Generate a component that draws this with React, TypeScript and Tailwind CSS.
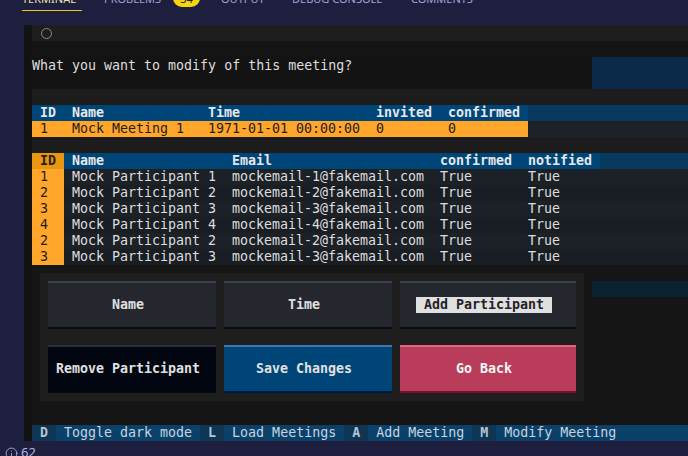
import { Info } from "lucide-react";

const meetingCols = [
	{ label: "ID", w: "w-[32px]" },
	{ label: "Name", w: "w-[136px]" },
	{ label: "Time", w: "w-[168px]" },
	{ label: "invited", w: "w-[72px]" },
	{ label: "confirmed", w: "w-[88px]" },
];

const meetingRow = ["1", "Mock Meeting 1", "1971-01-01 00:00:00", "0", "0"];

const partWidths = ["w-[160px]", "w-[208px]", "w-[88px]", "w-[80px]"];
const partHeaders = ["Name", "Email", "confirmed", "notified"];

const participants = [
	["1", "Mock Participant 1", "mockemail-1@fakemail.com"],
	["2", "Mock Participant 2", "mockemail-2@fakemail.com"],
	["3", "Mock Participant 3", "mockemail-3@fakemail.com"],
	["4", "Mock Participant 4", "mockemail-4@fakemail.com"],
	["2", "Mock Participant 2", "mockemail-2@fakemail.com"],
	["3", "Mock Participant 3", "mockemail-3@fakemail.com"],
];

const rowBg = ["bg-[#1c2027]", "bg-[#1a1d23]"];

const footerKeys = [
	["D", "Toggle dark mode"],
	["L", "Load Meetings"],
	["A", "Add Meeting"],
	["M", "Modify Meeting"],
];

// labels sit on the terminal's 8px grid, so they lean left by half a cell when they can't centre exactly
function Btn({
	label,
	cls,
	focused,
}: {
	label: string;
	cls: string;
	focused?: boolean;
}) {
	return (
		<div className={`h-[48px] flex items-center border-t-2 border-b-2 font-bold ${cls}`}>
			{focused ? (
				<span className="bg-[#e0e0e0] text-[#1f2228] px-[8px]">{label}</span>
			) : (
				<span>{label}</span>
			)}
		</div>
	);
}

export default function App() {
	return (
		<div className="w-[688px] h-[456px] bg-[#1e1f3e] flex flex-col overflow-hidden">
			{/* panel tabs, cut off at the top */}
			<div className="h-[25px] overflow-hidden shrink-0">
				<div className="-mt-[7px] flex items-start pl-[22px] text-[11px] leading-none font-['Noto_Sans',sans-serif] text-[#a3a3d6] whitespace-nowrap">
					<div className="w-[60px] h-[18px] border-b border-[#f0c40a] text-[#ece3b0]">TERMINAL</div>
					<div className="ml-[22px] w-[59px]">PROBLEMS</div>
					<div className="ml-[10px] w-[27px] h-[18px] -mt-[4px] rounded-full bg-[#f5d50c] text-[#1e1f3e] flex items-center justify-center">
						34
					</div>
					<div className="ml-[21px] w-[45px]">OUTPUT</div>
					<div className="ml-[26px] w-[94px]">DEBUG CONSOLE</div>
					<div className="ml-[25px] w-[64px]">COMMENTS</div>
				</div>
			</div>

			<div className="flex h-[416px] shrink-0">
				<div className="w-[24px]" />
				<div className="w-[8px] bg-[#121212]" />
				<div className="w-[656px] flex flex-col font-['DejaVu_Sans_Mono',monospace] text-[13.3px] leading-[16px] text-[#dedede] whitespace-pre">
					{/* header */}
					<div className="h-[16px] bg-[#1e1e1e] flex items-center">
						<div className="ml-[9px] w-[11px] h-[11px] rounded-full border-[1.5px] border-[#8c8c8c]" />
					</div>
					<div className="h-[16px] bg-[#141414]" />
					<div className="h-[32px] flex">
						<div className="flex-1 bg-[#131313] pt-[1px]">What you want to modify of this meeting?</div>
						<div className="w-[96px] bg-[#0b2a4a]" />
					</div>
					<div className="h-[16px] bg-[#1c1c1c]" />

					{/* meeting table */}
					<div className="flex h-[16px] font-bold text-[#e4e8ec]">
						{meetingCols.map((c) => (
							<div key={c.label} className={`${c.w} pl-[8px] bg-[#004578]`}>
								{c.label}
							</div>
						))}
						<div className="flex-1 bg-[#073a5e]" />
					</div>
					<div className="flex h-[16px] text-[#1e1e1e]">
						{meetingRow.map((v, i) => (
							<div key={i} className={`${meetingCols[i].w} pl-[8px] bg-[#ffa62b]`}>
								{v}
							</div>
						))}
						<div className="flex-1 bg-[#1d2128]" />
					</div>
					<div className="h-[16px] bg-[#1c1c1c]" />

					{/* participants table */}
					<div className="flex h-[16px] font-bold text-[#e4e8ec]">
						<div className="w-[32px] pl-[8px] bg-[#e8950f] text-[#1e1e1e]">ID</div>
						{partHeaders.map((h, i) => (
							<div key={h} className={`${partWidths[i]} pl-[8px] bg-[#004578]`}>
								{h}
							</div>
						))}
						<div className="flex-1 bg-[#073a5e]" />
					</div>
					{participants.map((p, r) => (
						<div key={r} className={`flex h-[16px] ${rowBg[r % 2]}`}>
							<div className="w-[32px] pl-[8px] bg-[#ffa62b] text-[#1e1e1e]">{p[0]}</div>
							<div className={`${partWidths[0]} pl-[8px]`}>{p[1]}</div>
							<div className={`${partWidths[1]} pl-[8px]`}>{p[2]}</div>
							<div className={`${partWidths[2]} pl-[8px]`}>True</div>
							<div className={`${partWidths[3]} pl-[8px]`}>True</div>
							<div className="flex-1" />
						</div>
					))}

					{/* buttons */}
					<div className="h-[160px] flex bg-[#151515]">
						<div className="w-[560px] pl-[8px] pt-[8px]">
							<div className="w-[544px] h-[128px] bg-[#1e1e1e] p-[8px] grid grid-cols-[168px_168px_176px] gap-x-[8px] gap-y-[16px] text-[#e0e0e0]">
								<Btn label="Name" cls="pl-[64px] bg-[#24272e] border-t-[#3d4046] border-b-[#0b0b0b]" />
								<Btn label="Time" cls="pl-[64px] bg-[#24272e] border-t-[#3d4046] border-b-[#0b0b0b]" />
								<Btn label="Add Participant" focused cls="pl-[16px] bg-[#24272e] border-t-[#3d4046] border-b-[#0b0b0b]" />
								<Btn label="Remove Participant" cls="pl-[8px] bg-[#020611] border-t-[#2b2f39] border-b-[#020611]" />
								<Btn label="Save Changes" cls="pl-[32px] bg-[#004578] border-t-[#3f77b6] border-b-[#001540]" />
								<Btn label="Go Back" cls="pl-[56px] bg-[#ba3c5b] border-t-[#e2657f] border-b-[#7a0f2d] text-[#f4f4f4]" />
							</div>
						</div>
						<div className="w-[96px] pt-[16px]">
							<div className="h-[16px] bg-[#0b2233]" />
						</div>
					</div>

					{/* footer */}
					<div className="h-[16px] flex bg-[#0b4169] text-[#c6d3e0]">
						{footerKeys.map(([k, d]) => (
							<div key={k} className="flex">
								<span className="w-[24px] text-center bg-[#0f3554] font-bold text-[#b7c3cf]">{k}</span>
								<span className="px-[8px]">{d}</span>
							</div>
						))}
						<div className="flex-1" />
					</div>
				</div>
			</div>

			{/* status bar, cut off at the bottom */}
			<div className="h-[15px] flex items-start pt-[5px] pl-[5px] gap-[3px] text-[13px] leading-none font-['Noto_Sans',sans-serif] text-[#b3b3e6]">
				<Info size={13} strokeWidth={1.6} className="mt-[1px]" />
				<span>62</span>
			</div>
		</div>
	);
}
